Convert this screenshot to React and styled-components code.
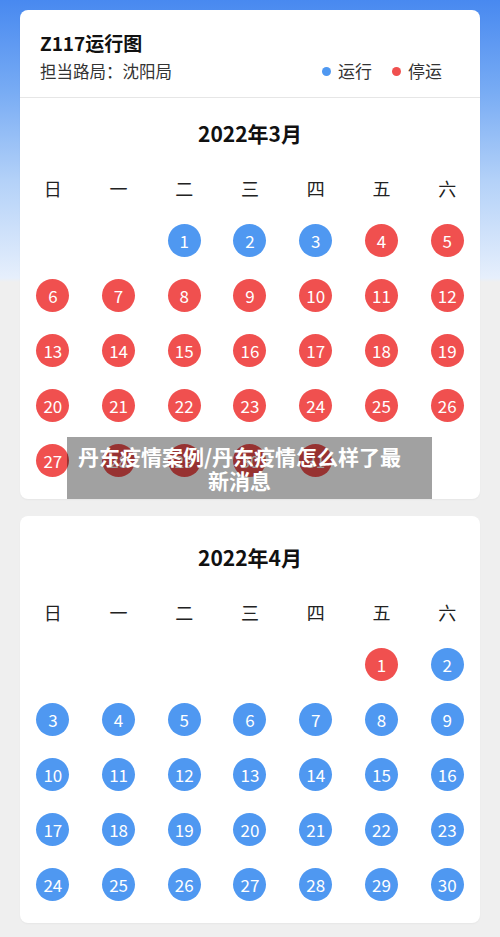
import React from 'react'
import styled, { createGlobalStyle } from 'styled-components'

const GlobalStyle = createGlobalStyle`
  html, body {
    margin: 0;
    padding: 0;
    background: #efefef;
  }
  body {
    font-family: "Noto Sans CJK SC", "Noto Sans", sans-serif;
    color: #222;
  }
`

const BLUE = '#4f98f1'
const RED = '#f0504f'
const WEEK = ['日', '一', '二', '三', '四', '五', '六']

const months = [
  {
    title: '2022年3月',
    offset: 2,
    days: 31,
    stopped: d => d >= 4,
    top: 22
  },
  {
    title: '2022年4月',
    offset: 5,
    days: 30,
    stopped: d => d === 1,
    top: 28
  }
]

export default function App() {
  return (
    <Page>
      <GlobalStyle />
      <Card>
        <Header>
          <Title>Z117运行图</Title>
          <SubRow>
            <Sub>担当路局：沈阳局</Sub>
            <Legend>
              <LegendItem>
                <Dot color={BLUE} />
                运行
              </LegendItem>
              <LegendItem>
                <Dot color={RED} />
                停运
              </LegendItem>
            </Legend>
          </SubRow>
        </Header>
        <Month data={months[0]} />
      </Card>
      <Card second>
        <Month data={months[1]} />
      </Card>
      <Caption>丹东疫情案例/丹东疫情怎么样了最新消息</Caption>
    </Page>
  )
}

const Month = ({ data }) => {
  const cells = []
  for (let i = 0; i < data.offset; i++) cells.push(<Cell key={'e' + i} />)
  for (let d = 1; d <= data.days; d++) {
    cells.push(
      <Cell key={d}>
        <Day color={data.stopped(d) ? RED : BLUE}>{d}</Day>
      </Cell>
    )
  }
  return (
    <MonthBox top={data.top}>
      <MonthTitle>{data.title}</MonthTitle>
      <WeekRow>
        {WEEK.map(w => (
          <WeekDay key={w}>{w}</WeekDay>
        ))}
      </WeekRow>
      <Grid>{cells}</Grid>
    </MonthBox>
  )
}

const Page = styled.div`
  position: relative;
  height: 937px;
  padding-top: 10px;
  box-sizing: border-box;
  overflow: hidden;
  background: linear-gradient(
    to bottom,
    #4889f0 0px,
    #77abf4 90px,
    #b3d1f8 180px,
    #e6effc 278px,
    #efefef 282px,
    #efefef 100%
  );
`

const Card = styled.div`
  margin: ${p => (p.second ? '17px' : '0')} 20px 0;
  background: #fff;
  border-radius: 8px;
  box-shadow: 0 1px 2px rgba(0, 0, 0, 0.04);
`

const Header = styled.div`
  padding: 20px 20px 15px;
  border-bottom: 1px solid #e6e6e6;
`

const Title = styled.div`
  font-size: 19px;
  line-height: 26px;
  font-weight: 700;
  color: #111;
`

const SubRow = styled.div`
  margin-top: 4px;
  display: flex;
  align-items: center;
  justify-content: space-between;
`

const Sub = styled.div`
  font-size: 16.5px;
  line-height: 22px;
  color: #333;
`

const Legend = styled.div`
  display: flex;
  gap: 20px;
  margin-right: 18px;
`

const LegendItem = styled.div`
  display: flex;
  align-items: center;
  font-size: 17px;
  line-height: 22px;
  color: #333;
`

const Dot = styled.span`
  width: 9px;
  height: 9px;
  border-radius: 50%;
  background: ${p => p.color};
  margin-right: 7px;
`

const MonthBox = styled.div`
  padding: ${p => p.top}px 0 11px;
`

const MonthTitle = styled.div`
  text-align: center;
  font-size: 21px;
  line-height: 26px;
  font-weight: 700;
  color: #111;
`

const WeekRow = styled.div`
  margin-top: 27px;
  display: grid;
  grid-template-columns: repeat(7, 1fr);
  height: 30px;
  align-items: center;
`

const WeekDay = styled.div`
  text-align: center;
  font-size: 18px;
  color: #222;
`

const Grid = styled.div`
  margin-top: 10px;
  display: grid;
  grid-template-columns: repeat(7, 1fr);
  grid-auto-rows: 55px;
`

const Cell = styled.div`
  display: flex;
  align-items: center;
  justify-content: center;
`

const Day = styled.div`
  width: 33px;
  height: 33px;
  border-radius: 50%;
  background: ${p => p.color};
  color: #fff;
  font-size: 17px;
  display: flex;
  align-items: center;
  justify-content: center;
`

const Caption = styled.div`
  position: absolute;
  left: 67px;
  top: 437px;
  width: 365px;
  height: 62px;
  box-sizing: border-box;
  padding: 7px 28px 0 8px;
  background: rgba(0, 0, 0, 0.37);
  color: #fff;
  font-size: 21px;
  line-height: 24px;
  font-weight: 700;
  text-align: center;
`
